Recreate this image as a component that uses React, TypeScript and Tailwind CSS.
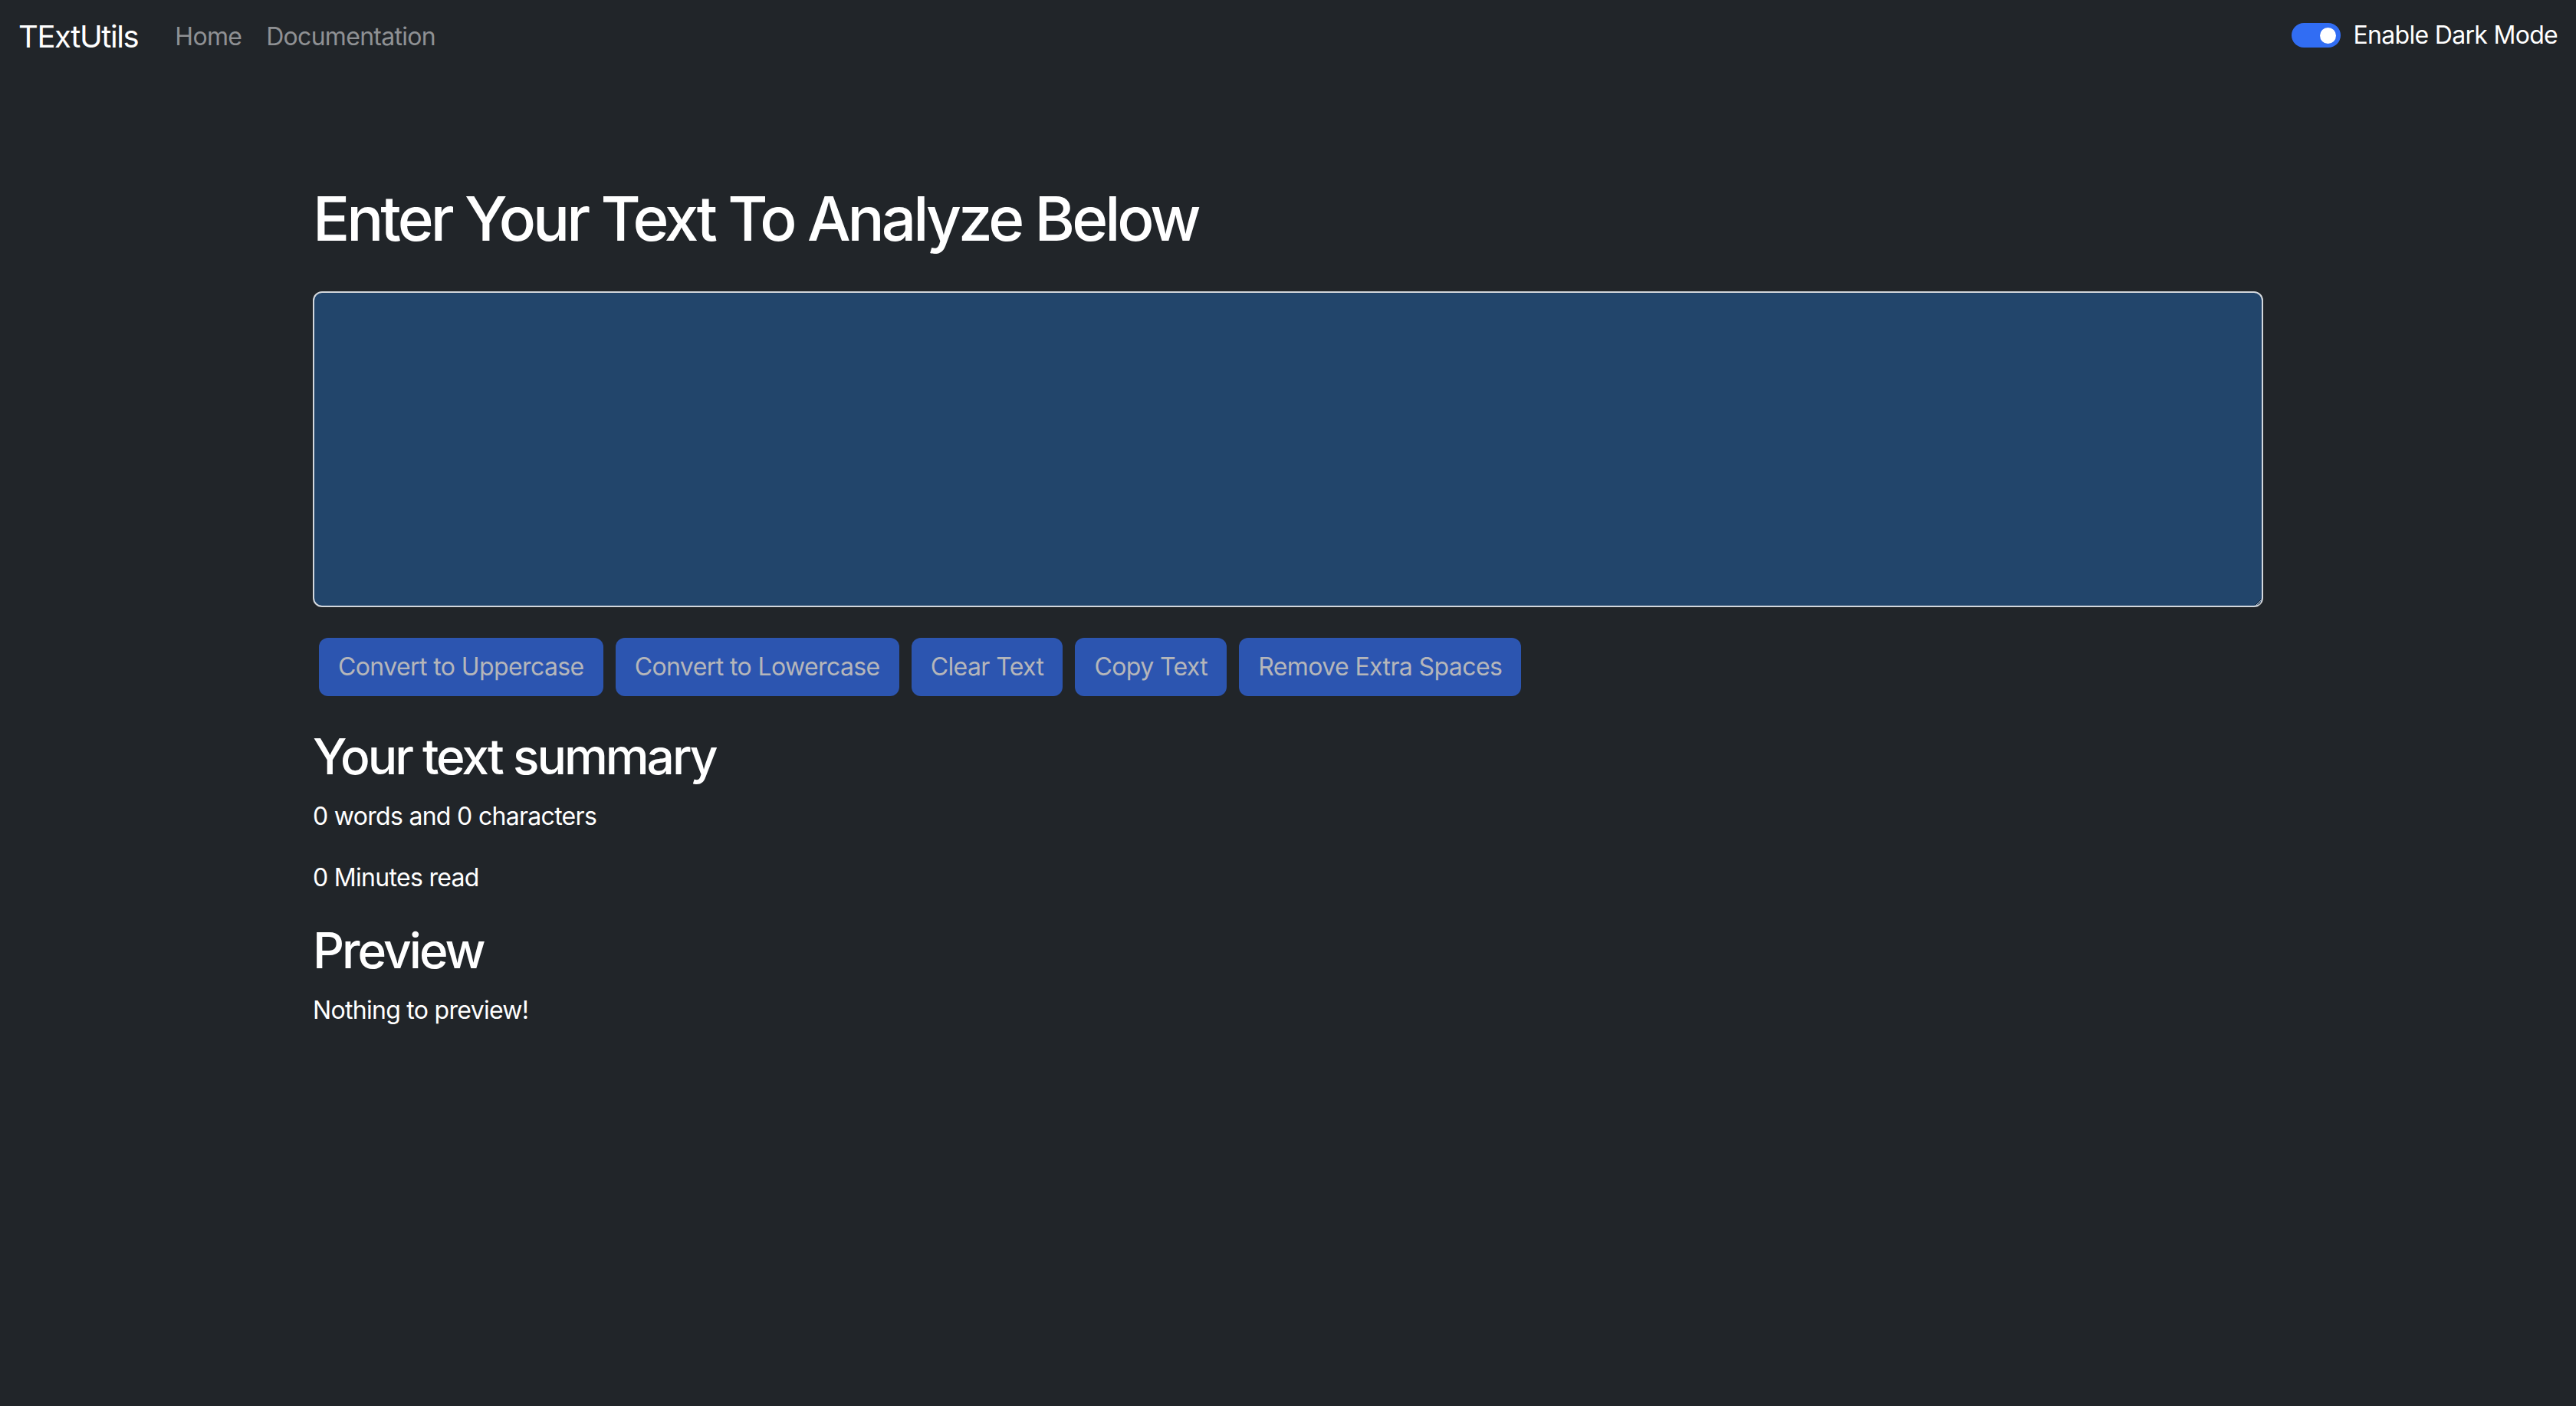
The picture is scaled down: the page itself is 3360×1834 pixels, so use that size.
import { useState } from 'react';

// TextUtils - analyzer page, dark mode

const buttons = [
  'Convert to Uppercase',
  'Convert to Lowercase',
  'Clear Text',
  'Copy Text',
  'Remove Extra Spaces',
];

export default function App() {
  const [text, setText] = useState('');
  const [dark, setDark] = useState(true);

  const words = text.split(/\s+/).filter(w => w.length !== 0).length;
  const minutes = 0.008 * words;

  return (
    <div
      className="min-h-screen bg-[#212529] text-white"
      style={{ fontFamily: 'Inter, "Noto Sans", sans-serif' }}
    >
      <nav className="h-[96px] px-[24px] flex items-center justify-between">
        <div className="flex items-center">
          <a className="text-[40px] leading-[60px] tracking-[-1.4px] text-white mr-[32px]">TExtUtils</a>
          <a className="text-[32px] leading-[48px] tracking-[-0.7px] px-[16px] text-[#8f9194]">Home</a>
          <a className="text-[32px] leading-[48px] tracking-[-0.7px] px-[16px] text-[#8f9194]">Documentation</a>
        </div>
        <label className="flex items-center mb-[4px] cursor-pointer">
          <button
            onClick={() => setDark(!dark)}
            className="w-[64px] h-[32px] rounded-full bg-[#316df3] flex items-center justify-end pr-[6px]"
          >
            <span className="block w-[21px] h-[21px] rounded-full bg-white" />
          </button>
          <span className="ml-[17px] text-[32px] leading-[48px] tracking-[-0.7px] text-white">Enable Dark Mode</span>
        </label>
      </nav>

      <div className="w-[2544px] mx-auto pt-[141px]">
        <h1 className="text-[80px] leading-[96px] tracking-[-4px] font-medium mb-[47px]">Enter Your Text To Analyze Below</h1>
        <textarea
          value={text}
          onChange={e => setText(e.target.value)}
          className="block w-full h-[412px] bg-[#22456b] border-2 border-[#d3d7dc] rounded-[12px] text-white text-[32px] px-[24px] py-[12px] outline-none mb-[32px]"
        />
        <div className="flex flex-wrap">
          {buttons.map(b => (
            <button
              key={b}
              className="m-[8px] h-[76px] px-[25px] rounded-[12px] bg-[#2c55b0] text-[#b5b6ba] text-[32px] leading-[48px] tracking-[-0.6px]"
            >
              {b}
            </button>
          ))}
        </div>

        <div className="mt-[32px] text-[32px] leading-[48px] tracking-[-0.7px]">
          <h2 className="text-[64px] leading-[77px] tracking-[-3px] font-medium mb-[16px]">Your text summary</h2>
          <p className="mb-[32px]">
            {words} words and {text.length} characters
          </p>
          <p className="mb-[32px]">{minutes} Minutes read</p>
          <h2 className="text-[64px] leading-[77px] tracking-[-3px] font-medium mb-[16px]">Preview</h2>
          <p>{text.length > 0 ? text : 'Nothing to preview!'}</p>
        </div>
      </div>
    </div>
  );
}
